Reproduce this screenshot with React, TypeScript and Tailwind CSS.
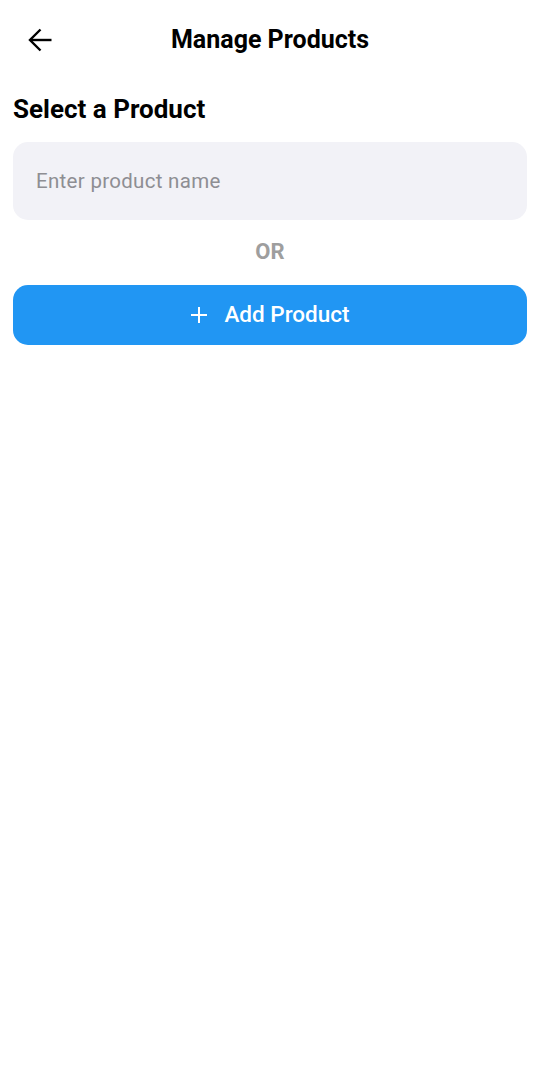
import React from 'react';

const BackArrow: React.FC = () => (
  <svg width="26" height="26" viewBox="0 0 26 26" fill="none" stroke="currentColor" strokeWidth="2.4" strokeLinecap="butt" strokeLinejoin="miter">
    <path d="M24.5 13H3" />
    <path d="M13.5 2.5L3 13l10.5 10.5" />
  </svg>
);

const PlusIcon: React.FC = () => (
  <svg width="18" height="18" viewBox="0 0 18 18" fill="none" stroke="currentColor" strokeWidth="2">
    <path d="M9 1v16M1 9h16" />
  </svg>
);

const App: React.FC = () => {
  return (
    <div className="min-h-[1078px] w-full bg-white text-black" style={{ fontFamily: 'Roboto, "Noto Sans", sans-serif' }}>
      {/* Header */}
      <header className="relative h-20 flex items-center justify-center">
        <button className="absolute left-[27px] top-[27px] text-black">
          <BackArrow />
        </button>
        <h1 className="text-[25px] leading-7 font-bold">Manage Products</h1>
      </header>

      <main className="px-[13px]">
        <h2 className="mt-[15px] text-[26px] leading-7 font-bold">Select a Product</h2>

        <div className="mt-[19px] h-[78px] rounded-[15px] bg-[#f2f2f7] flex items-center px-[23px]">
          <input
            type="text"
            placeholder="Enter product name"
            className="w-full bg-transparent outline-none text-[20.5px] tracking-[0.3px] text-black placeholder:text-[#8e8e93]"
          />
        </div>

        <div className="mt-[19px] h-6 flex items-center justify-center text-[22px] font-bold text-[#9e9e9e]">
          OR
        </div>

        <button className="mt-[22px] w-full h-[60px] rounded-[15px] bg-[#2196f3] text-white flex items-center justify-center gap-[16px]">
          <PlusIcon />
          <span className="text-[22.5px] font-medium">Add Product</span>
        </button>
      </main>
    </div>
  );
};

export default App;
